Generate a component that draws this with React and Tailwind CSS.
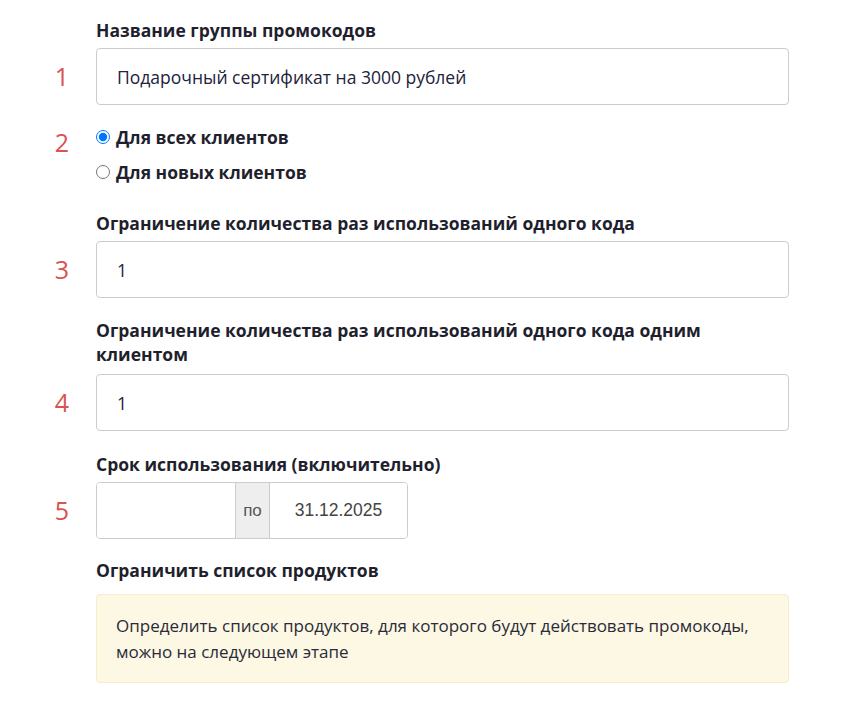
import React from 'react';

const font = { fontFamily: '"Open Sans", "Liberation Sans", sans-serif' };
const arial = { fontFamily: '"Liberation Sans", Arial, sans-serif' };

function Num({ n, className = '' }) {
    return (
        <div className={`w-[96px] shrink-0 pr-[27px] text-right text-[25px] leading-none text-[#d9534f] ${className}`}>{n}</div>
    );
}

function Label({ children }) {
    return <div className="pl-[96px] text-[17.5px] font-bold leading-[24px] text-[#1f1f2e]">{children}</div>;
}

function TextRow({ n, value, className = '' }) {
    return (
        <div className={`flex items-center ${className}`}>
            <Num n={n} />
            <input
                readOnly
                value={value}
                className="h-[57px] w-[693px] rounded-[4px] border border-[#cccccc] bg-white px-[20px] text-[17.5px] text-[#22223a] outline-none"
                style={font}
            />
        </div>
    );
}

export default function App() {
    return (
        <div className="min-h-[701px] w-[859px] bg-white pt-[18px]" style={font}>
            <Label>Название группы промокодов</Label>
            <TextRow n="1" value="Подарочный сертификат на 3000 рублей" className="mt-[6px]" />

            <div className="mt-[20px] flex">
                <Num n="2" className="pt-[5px]" />
                <div className="flex flex-col gap-[11px] text-[17.5px] font-bold leading-[24px] text-[#1f1f2e]">
                    <label className="flex items-center gap-[6px]">
                        <input type="radio" name="who" defaultChecked className="m-0 h-[14px] w-[14px] accent-[#0075ff]" />
                        Для всех клиентов
                    </label>
                    <label className="flex items-center gap-[6px]">
                        <input type="radio" name="who" className="m-0 h-[14px] w-[14px]" />
                        Для новых клиентов
                    </label>
                </div>
            </div>

            <div className="mt-[27px]">
                <Label>Ограничение количества раз использований одного кода</Label>
            </div>
            <TextRow n="3" value="1" className="mt-[6px]" />

            <div className="mt-[20px]">
                <Label>
                    Ограничение количества раз использований одного кода одним
                    <br />
                    клиентом
                </Label>
            </div>
            <TextRow n="4" value="1" className="mt-[8px]" />

            <div className="mt-[21px]">
                <Label>Срок использования (включительно)</Label>
            </div>
            <div className="mt-[6px] flex items-center">
                <Num n="5" />
                <div className="flex h-[57px] w-[312px] overflow-hidden rounded-[4px] border border-[#cccccc]">
                    <input readOnly value="" className="w-[138px] bg-white outline-none" />
                    <div
                        className="flex w-[35px] items-center justify-center border-x border-[#cccccc] bg-[#eeeeee] text-[17px] text-[#555555]"
                        style={arial}
                    >
                        по
                    </div>
                    <input
                        readOnly
                        value="31.12.2025"
                        className="min-w-0 flex-1 bg-white text-center text-[17.5px] text-[#444444] outline-none"
                        style={arial}
                    />
                </div>
            </div>

            <div className="mt-[19px]">
                <Label>Ограничить список продуктов</Label>
            </div>
            <div className="mt-[12px] pl-[96px]">
                <div className="w-[693px] rounded-[4px] border border-[#faebcc] bg-[#fcf8e3] px-[19px] pb-[17px] pt-[18px] text-[17px] leading-[26px] text-[#2a2a3a]">
                    Определить список продуктов, для которого будут действовать промокоды,
                    <br />
                    можно на следующем этапе
                </div>
            </div>
        </div>
    );
}
